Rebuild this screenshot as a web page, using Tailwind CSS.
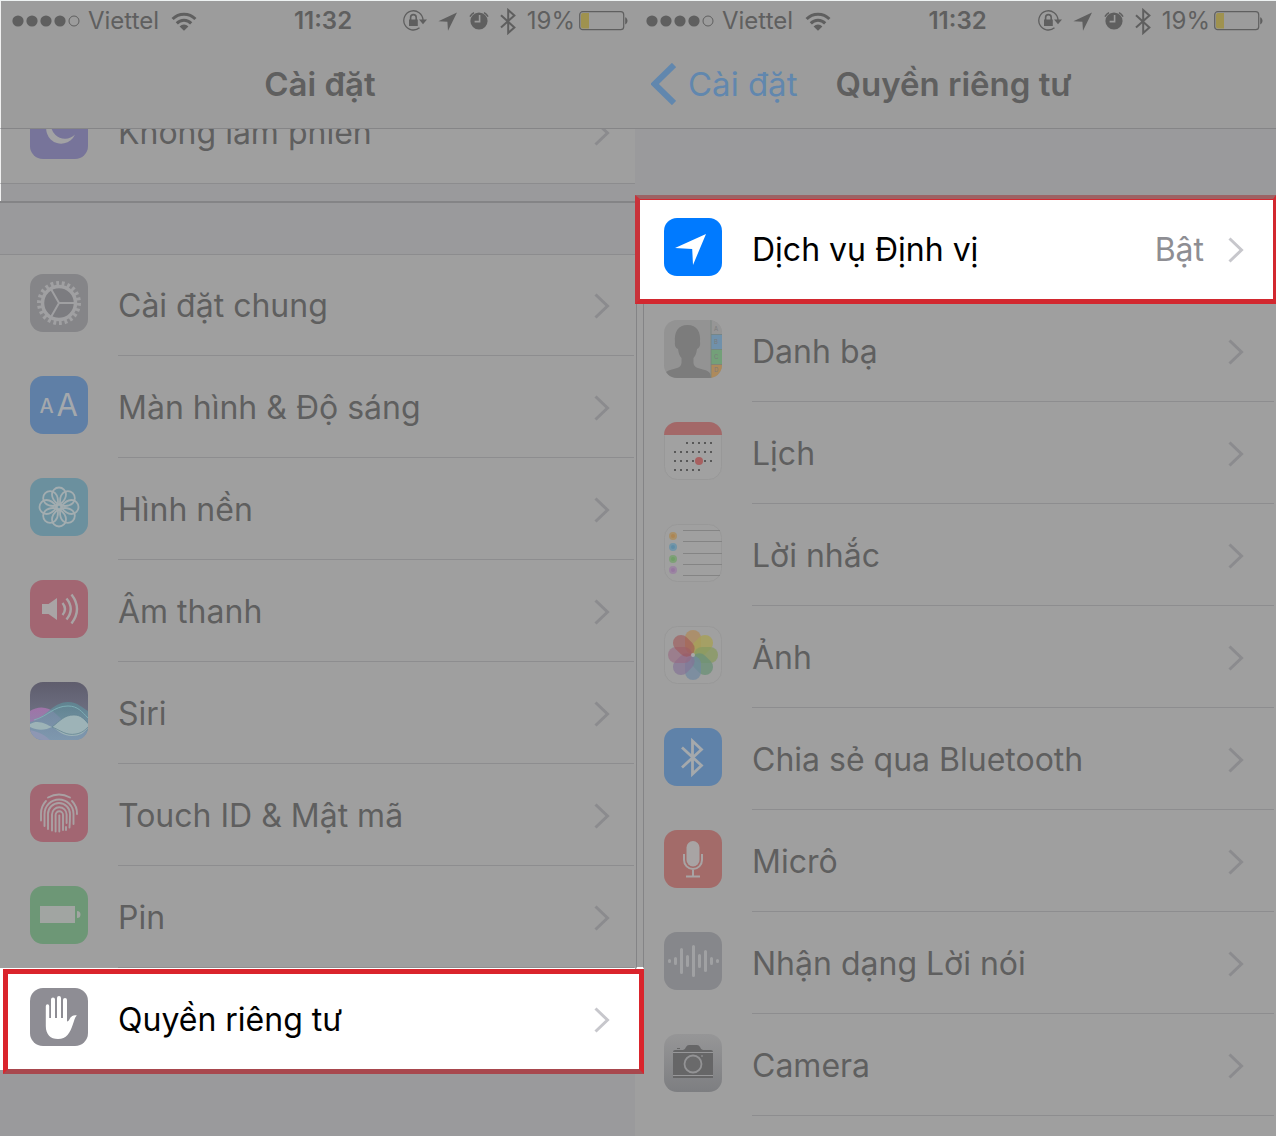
<!DOCTYPE html>
<html lang="vi">
<head>
    <meta charset="UTF-8">
    <meta name="viewport" content="width=device-width, initial-scale=1.0">
    <title>Cài đặt - Quyền riêng tư</title>
    <script src="https://cdn.jsdelivr.net/npm/@tailwindcss/browser@4"></script>
</head>
<body class="bg-[#9a9a9c] font-['Inter','Liberation_Sans',sans-serif] text-[#5f5f5f]">
    <!-- Shared symbols -->
    <svg class="hidden">
        <symbol id="chevron" viewBox="0 0 16 26"><path d="M1.5 1.5L13.5 13 1.5 24.5" fill="none" stroke="currentColor" stroke-width="3"/></symbol>
        <symbol id="signal" viewBox="0 0 68 12">
            <g fill="currentColor"><circle cx="6" cy="6" r="5.6"/><circle cx="20" cy="6" r="5.6"/><circle cx="34" cy="6" r="5.6"/><circle cx="48" cy="6" r="5.6"/></g>
            <circle cx="62" cy="6" r="5" fill="none" stroke="currentColor" stroke-width="1"/>
        </symbol>
        <symbol id="wifi" viewBox="0 0 26 19">
            <g fill="none" stroke="currentColor" stroke-width="3"><path d="M1.6 7a16 16 0 0 1 22.8 0"/><path d="M5.8 11.4a10 10 0 0 1 14.4 0"/></g>
            <path d="M8.6 14.4a6.2 6.2 0 0 1 8.8 0L13 18.8z" fill="currentColor"/>
        </symbol>
        <symbol id="status-icons" viewBox="0 0 114 27">
            <g fill="none" stroke="currentColor" stroke-width="1.3">
                <path d="M16.5 19.8A9.6 9.6 0 1 1 20 12"/>
                <path d="M7.6 12V9.4a2.8 2.8 0 0 1 5.6 0V12" stroke-width="1.6"/>
            </g>
            <path d="M6 11.5h8.8v6.5H6zM16 11.5h8l-4 4.8z" fill="currentColor"/>
            <path d="M54 4.5L35.4 13.2l9 .6.6 9z" fill="currentColor"/>
            <circle cx="76" cy="13" r="8.6" fill="currentColor"/>
            <path d="M67 8.6a11 11 0 0 1 4-4M85 8.6a11 11 0 0 0-4-4" fill="none" stroke="currentColor" stroke-width="1.6"/>
            <path d="M76.6 7v6.6h-5" fill="none" stroke="#9c9c9c" stroke-width="1.6"/>
            <path d="M98 7.2l13.4 12.2-6.2 5.6V2l6.2 5.4L98 19.6" fill="none" stroke="currentColor" stroke-width="2"/>
        </symbol>
        <symbol id="battery" viewBox="0 0 49 20">
            <rect x="0.7" y="0.7" width="44" height="18" rx="3" fill="none" stroke="currentColor" stroke-width="1.2"/>
            <path d="M46.2 6.2c3 1 3 6.2 0 7.2z" fill="currentColor"/>
            <path d="M2 4a2 2 0 0 1 2-2h6v15.5H4a2 2 0 0 1-2-2z" fill="#9f924f"/>
        </symbol>
    </svg>

    <main class="grid min-h-screen grid-cols-[635fr_641fr] border-t border-[#eef2f2]">
        <!-- Settings screen -->
        <section class="min-w-0">
            <header class="h-32 border-b border-l border-b-[#858587] border-l-[#f0f0f0] bg-[#9c9c9c]">
                <div class="grid h-10 grid-cols-[280fr_auto_274fr] items-center pr-[7px] pl-[11px] text-2xl">
                    <div class="flex items-center gap-2">
                        <svg class="h-3 w-[68px]"><use href="#signal"/></svg>
                        <span>Viettel</span>
                        <svg class="ml-1 h-[19px] w-[26px]"><use href="#wifi"/></svg>
                    </div>
                    <time class="font-semibold">11:32</time>
                    <div class="flex items-center justify-end">
                        <svg class="mr-2.5 h-[27px] w-[114px]"><use href="#status-icons"/></svg>
                        <span class="mr-1">19%</span>
                        <svg class="h-5 w-[49px]"><use href="#battery"/></svg>
                    </div>
                </div>
                <h1 class="pt-5 pl-1 text-center text-[33px] leading-[46px] font-semibold">Cài đặt</h1>
            </header>

            <div class="flex h-[55px] items-end overflow-hidden border-b border-l border-b-[#8c8c8e] border-l-[#f0f0f0] bg-[#9f9f9f]">
                <a href="#" class="flex h-[102px] w-full shrink-0 items-start pl-[29px]">
                    <svg class="mt-5 size-[58px] shrink-0" viewBox="0 0 58 58">
                        <rect width="58" height="58" rx="13" fill="#77749a"/>
                        <path d="M25 14a15 15 0 1 0 20 19.5A13.5 13.5 0 0 1 25 14z" fill="#a2a2a4"/>
                    </svg>
                    <span class="ml-[30px] flex h-full flex-1 items-center justify-between pt-0.5 pr-[25px] text-[32px]">
                        Không làm phiền
                        <svg class="h-[26px] w-4 text-[#8b8b8e]"><use href="#chevron"/></svg>
                    </span>
                </a>
            </div>
            <div class="h-[17px] border-l border-[#f0f0f0]"></div>
            <div class="h-[53px] border-t-2 border-[#848486]"></div>

            <ul class="bg-[#9f9f9f] text-[32px] shadow-[inset_0_1px_0_#8c8c8e]">
                <li>
                    <a href="#" class="flex h-[102px] items-start pl-[30px]">
                        <svg class="mt-5 size-[58px] shrink-0" viewBox="0 0 58 58">
                            <rect width="58" height="58" rx="13" fill="#858588"/>
                            <circle cx="29" cy="29" r="15" fill="#7c7c80"/>
                            <g fill="none" stroke="#a0a0a2">
                                <circle cx="29" cy="29" r="19.5" stroke-width="5" pathLength="44" stroke-dasharray="1 1"/>
                                <circle cx="29" cy="29" r="16.5" stroke-width="3.5"/>
                                <path d="M29 29h16M29 29l-8-13.9M29 29l-8 13.9" stroke-width="2"/>
                            </g>
                        </svg>
                        <span class="ml-[30px] mr-px flex h-full flex-1 items-center justify-between border-b border-[#8d8d8f] pt-0.5 pr-6">
                            Cài đặt chung
                            <svg class="h-[26px] w-4 text-[#8b8b8e]"><use href="#chevron"/></svg>
                        </span>
                    </a>
                </li>
                <li>
                    <a href="#" class="flex h-[102px] items-start pl-[30px]">
                        <svg class="mt-5 size-[58px] shrink-0" viewBox="0 0 58 58">
                            <rect width="58" height="58" rx="13" fill="#5f7fa6"/>
                            <g fill="#a4a8ac" font-family="Inter, sans-serif"><text x="9.5" y="37" font-size="20" font-weight="500">A</text><text x="26.5" y="40" font-size="31">A</text></g>
                        </svg>
                        <span class="ml-[30px] mr-px flex h-full flex-1 items-center justify-between border-b border-[#8d8d8f] pt-0.5 pr-6">
                            Màn hình &amp; Độ sáng
                            <svg class="h-[26px] w-4 text-[#8b8b8e]"><use href="#chevron"/></svg>
                        </span>
                    </a>
                </li>
                <li>
                    <a href="#" class="flex h-[102px] items-start pl-[30px]">
                        <svg class="mt-5 size-[58px] shrink-0" viewBox="0 0 58 58">
                            <defs><path id="petal" d="M29 27C24 23.5 22 20 22 16.500a7 7 0 0 1 14 0C36 20 34 23.5 29 27z"/></defs>
                            <rect width="58" height="58" rx="13" fill="#6b909e"/>
                            <g fill="none" stroke="#a3adb0" stroke-width="1.8">
                                <use href="#petal"/><use href="#petal" transform="rotate(45 29 29)"/><use href="#petal" transform="rotate(90 29 29)"/><use href="#petal" transform="rotate(135 29 29)"/>
                                <use href="#petal" transform="rotate(180 29 29)"/><use href="#petal" transform="rotate(225 29 29)"/><use href="#petal" transform="rotate(270 29 29)"/><use href="#petal" transform="rotate(315 29 29)"/>
                                <circle cx="29" cy="29" r="3"/>
                            </g>
                        </svg>
                        <span class="ml-[30px] mr-px flex h-full flex-1 items-center justify-between border-b border-[#8d8d8f] pt-0.5 pr-6">
                            Hình nền
                            <svg class="h-[26px] w-4 text-[#8b8b8e]"><use href="#chevron"/></svg>
                        </span>
                    </a>
                </li>
                <li>
                    <a href="#" class="flex h-[102px] items-start pl-[30px]">
                        <svg class="mt-5 size-[58px] shrink-0" viewBox="0 0 58 58">
                            <rect width="58" height="58" rx="13" fill="#a26672"/>
                            <path d="M12 24h6.5L27 18v22l-8.5-6H12z" fill="#a9a4a5"/>
                            <g fill="none" stroke="#a9a4a5" stroke-width="2.4"><path d="M32.500 23q5 6 0 12"/><path d="M36.500 18.500q8.500 10.500 0 21"/><path d="M41.500 14.500q11 14.500 0 29"/></g>
                        </svg>
                        <span class="ml-[30px] mr-px flex h-full flex-1 items-center justify-between border-b border-[#8d8d8f] pt-0.5 pr-6">
                            Âm thanh
                            <svg class="h-[26px] w-4 text-[#8b8b8e]"><use href="#chevron"/></svg>
                        </span>
                    </a>
                </li>
                <li>
                    <a href="#" class="flex h-[102px] items-start pl-[30px]">
                        <svg class="mt-5 size-[58px] shrink-0" viewBox="0 0 58 58">
                            <defs>
                                <clipPath id="tile"><rect width="58" height="58" rx="13"/></clipPath>
                                <linearGradient id="siri-sky" x2="0" y2="1"><stop stop-color="#5f5d6d"/><stop offset="0.5" stop-color="#6c6e80"/><stop offset="1" stop-color="#7c92a2"/></linearGradient>
                                <linearGradient id="siri-pink" x2="0" y2="1"><stop stop-color="#a073a8"/><stop offset="1" stop-color="#8290aa"/></linearGradient>
                                <linearGradient id="siri-blue" x2="0" y2="1"><stop stop-color="#5c8f9a"/><stop offset="1" stop-color="#7c9bb0"/></linearGradient>
                            </defs>
                            <g clip-path="url(#tile)">
                                <rect width="58" height="58" fill="url(#siri-sky)"/>
                                <path d="M0 29C8 24 18 24 26 32s18 14 32 18v8H0z" fill="url(#siri-pink)"/>
                                <path d="M0 40C14 38 22 20 38 20c10 0 14 6 20 9v29H0z" fill="url(#siri-blue)" opacity="0.7"/>
                                <path d="M4 38C18 34 24 24 38 24c10 0 14 6 20 12" fill="none" stroke="#7eaeb4" stroke-width="1"/>
                                <path d="M0 42c8-5 16 0 22 3 8-6 12-12 22-12 7 0 10 4 14 9v4c-4 5-8 8-16 8-10 0-14-6-20-9-6 3-14 4-22 0z" fill="#9db3b7"/>
                                <path d="M22 45c8 3 14 9 24 7 6-1 9-4 12-7M22 45c8-6 12-12 22-12 7 0 10 4 14 8" fill="none" stroke="#668794" stroke-width="0.8"/>
                                <path d="M0 48c8 2 14 4 20 10H0z" fill="#8e97b3"/>
                            </g>
                        </svg>
                        <span class="ml-[30px] mr-px flex h-full flex-1 items-center justify-between border-b border-[#8d8d8f] pt-0.5 pr-6">
                            Siri
                            <svg class="h-[26px] w-4 text-[#8b8b8e]"><use href="#chevron"/></svg>
                        </span>
                    </a>
                </li>
                <li>
                    <a href="#" class="flex h-[102px] items-start pl-[30px]">
                        <svg class="mt-5 size-[58px] shrink-0" viewBox="0 0 58 58">
                            <rect width="58" height="58" rx="13" fill="#a26672"/>
                            <g fill="none" stroke="#a9a1a3" stroke-width="1.9" stroke-linecap="round">
                                <path d="M18 13.500q11-6 22 0"/>
                                <path d="M11 36.500v-7a18 18 0 0 1 5-12.500M42 17a18 18 0 0 1 5 13"/>
                                <path d="M14.500 42V30a14.500 14.500 0 0 1 29 0v10"/>
                                <path d="M18 45V30a11 11 0 0 1 22 0q0 8-.5 13.500"/>
                                <path d="M22 46.500V30.500a7.300 7.300 0 0 1 14.600 0V39M36 43v3"/>
                                <path d="M25.600 47.500V31a3.700 3.700 0 0 1 7.400 0v15"/>
                                <path d="M29.300 47.500V31.500"/>
                            </g>
                        </svg>
                        <span class="ml-[30px] mr-px flex h-full flex-1 items-center justify-between border-b border-[#8d8d8f] pt-0.5 pr-6">
                            Touch ID &amp; Mật mã
                            <svg class="h-[26px] w-4 text-[#8b8b8e]"><use href="#chevron"/></svg>
                        </span>
                    </a>
                </li>
                <li>
                    <a href="#" class="flex h-[102px] items-start pl-[30px]">
                        <svg class="mt-5 size-[58px] shrink-0" viewBox="0 0 58 58">
                            <rect width="58" height="58" rx="13" fill="#6d9776"/>
                            <path d="M10 20h35v17H10zM47 25a3.5 3.5 0 0 1 0 7z" fill="#a1a5a2"/>
                        </svg>
                        <span class="ml-[30px] mr-px flex h-full flex-1 items-center justify-between border-b border-[#8d8d8f] pt-0.5 pr-6">
                            Pin
                            <svg class="h-[26px] w-4 text-[#8b8b8e]"><use href="#chevron"/></svg>
                        </span>
                    </a>
                </li>
                <!-- Highlighted row, its frame reaches over the next screen -->
                <li class="relative z-10 bg-white text-black">
                    <span class="absolute top-px -right-[9px] -bottom-1 left-[3px] border-5 border-[#da242c] border-b-[#a8484e] bg-white"></span>
                    <a href="#" class="relative flex h-[102px] items-start pl-[30px]">
                        <svg class="mt-5 size-[58px] shrink-0" viewBox="0 0 58 58">
                            <rect width="58" height="58" rx="13" fill="#8e8d94"/>
                            <path d="M15.800 18a1.700 1.700 0 0 1 3.400 0v12h1.800V11.500a2 2 0 0 1 4 0V30h2V10a2 2 0 0 1 4 0v20h2V12a2 2 0 0 1 4 0v21.500c1.200 0 2-1 2.600-2.500 1.400-3 4-4.500 7.400-3.600C45.500 28 44.500 31.500 43 36c-3 9-6.500 15-15 15-7.500 0-12.200-4.500-12.200-13z" fill="#fff"/>
                        </svg>
                        <span class="ml-[30px] flex h-full flex-1 items-center justify-between pt-0.5 pr-[25px]">
                            Quyền riêng tư
                            <svg class="h-[26px] w-4 text-[#c7c7cc]"><use href="#chevron"/></svg>
                        </span>
                    </a>
                </li>
            </ul>
        </section>

        <!-- Privacy screen -->
        <section class="min-w-0 bg-[#9f9f9f]">
            <header class="h-32 border-b border-[#858587] bg-[#9c9c9c]">
                <div class="grid h-10 grid-cols-[280fr_auto_274fr] items-center pr-[13px] pl-[11px] text-2xl">
                    <div class="flex items-center gap-2">
                        <svg class="h-3 w-[68px]"><use href="#signal"/></svg>
                        <span>Viettel</span>
                        <svg class="ml-1 h-[19px] w-[26px]"><use href="#wifi"/></svg>
                    </div>
                    <time class="font-semibold">11:32</time>
                    <div class="flex items-center justify-end">
                        <svg class="mr-2.5 h-[27px] w-[114px]"><use href="#status-icons"/></svg>
                        <span class="mr-1">19%</span>
                        <svg class="h-5 w-[49px]"><use href="#battery"/></svg>
                    </div>
                </div>
                <nav class="flex items-center gap-[38px] pt-5 pl-4 text-[33px] leading-[46px]">
                    <a href="#" class="flex items-center gap-3 text-[#6187ae]">
                        <svg class="h-[42px] w-[25px]" viewBox="0 0 25 42"><path d="M23 2L3.500 21 23 40" fill="none" stroke="currentColor" stroke-width="6"/></svg>
                        Cài đặt
                    </a>
                    <h1 class="font-semibold">Quyền riêng tư</h1>
                </nav>
            </header>
            <div class="h-[69px] bg-[#9a9a9c]"></div>

            <ul class="relative text-[32px]">
                <!-- Edges of the gap between the two screens -->
                <li aria-hidden="true" class="absolute top-[106px] left-px h-[665px] w-2 border-x border-b-2 border-x-[#848486] border-b-white"></li>
                <li class="relative bg-white text-black">
                    <span class="absolute -top-[3px] right-0 -bottom-1 left-0 border-t-4 border-r-[3px] border-b-5 border-l-5 border-t-[#9c6264] border-r-[#d2282f] border-b-[#d2282f] border-l-[#c8323a] bg-white shadow-[inset_0_1px_0_#d2282f]"></span>
                    <a href="#" class="relative flex h-[102px] items-start pl-[29px]">
                        <svg class="mt-5 size-[58px] shrink-0" viewBox="0 0 58 58">
                            <rect width="58" height="58" rx="13" fill="#007aff"/>
                            <path d="M42 16L11 30l17.200 1L29 47z" fill="#fff"/>
                        </svg>
                        <span class="ml-[30px] flex h-full flex-1 items-center justify-between pt-0.5 pr-8">
                            Dịch vụ Định vị
                            <span class="flex items-center gap-6 text-[#8e8e93]">Bật <svg class="h-[26px] w-4 text-[#c7c7cc]"><use href="#chevron"/></svg></span>
                        </span>
                    </a>
                </li>
                <li>
                    <a href="#" class="flex h-[102px] items-start pl-[29px]">
                        <svg class="mt-5 size-[58px] shrink-0" viewBox="0 0 58 58">
                            <g clip-path="url(#tile)">
                                <rect width="58" height="58" fill="#939393"/>
                                <path d="M0 58c0-6 3-7 8-8.500 5-1.500 9-2 9.500-6.500v-5c-2-2-3-5-3.500-9-3-1-3.500-5-3-7-1-10 3-17 12.500-17S37 12 36 22c.5 2 0 6-3 7-.5 4-1.500 7-3.500 9v5c.5 4.500 4.500 5 9.500 6.500 5 1.500 8 2.500 8 8.500z" fill="#7c7c7c"/>
                                <path d="M47 0h11v14H47z" fill="#969696"/><path d="M47 14h11v15H47z" fill="#7091ab"/><path d="M47 29h11v15H47z" fill="#73a079"/><path d="M47 44h11v14H47z" fill="#ad8a5b"/>
                                <path d="M47 0v58M47 14.500h11M47 29.500h11M47 44.500h11" stroke="#77837f" stroke-width="0.8"/>
                                <g font-family="Inter, sans-serif" font-size="6" fill="#7b7b7b"><text x="50" y="11">A</text><text x="50" y="24">B</text><text x="50" y="39">C</text><text x="50" y="52">D</text></g>
                            </g>
                        </svg>
                        <span class="ml-[30px] mr-[2px] flex h-full flex-1 items-center justify-between border-b border-[#8d8d8f] pt-0.5 pr-[30px]">
                            Danh bạ
                            <svg class="h-[26px] w-4 text-[#8b8b8e]"><use href="#chevron"/></svg>
                        </span>
                    </a>
                </li>
                <li>
                    <a href="#" class="flex h-[102px] items-start pl-[29px]">
                        <svg class="mt-5 size-[58px] shrink-0" viewBox="0 0 58 58">
                            <rect x="0.5" y="0.5" width="57" height="57" rx="13" fill="#a1a1a1" stroke="#989898"/>
                            <path d="M0 13A13 13 0 0 1 13 0h32a13 13 0 0 1 13 13z" fill="#a36868"/>
                            <g stroke="#585858" stroke-width="2" stroke-dasharray="2 4"><path d="M22 21h27M10 30h39M10 39h39M10 48h27"/></g>
                            <circle cx="35" cy="39" r="4" fill="#a86060"/>
                        </svg>
                        <span class="ml-[30px] mr-[2px] flex h-full flex-1 items-center justify-between border-b border-[#8d8d8f] pt-0.5 pr-[30px]">
                            Lịch
                            <svg class="h-[26px] w-4 text-[#8b8b8e]"><use href="#chevron"/></svg>
                        </span>
                    </a>
                </li>
                <li>
                    <a href="#" class="flex h-[102px] items-start pl-[29px]">
                        <svg class="mt-5 size-[58px] shrink-0" viewBox="0 0 58 58">
                            <rect x="0.5" y="0.5" width="57" height="57" rx="13" fill="#a0a0a0" stroke="#989898"/>
                            <path d="M19 6.500h37M19 17.500h39M19 29.500h39M19 40.500h39M19 51.500h37" stroke="#848484"/>
                            <g stroke-width="2"><circle cx="9" cy="12" r="3" fill="#ad8552" stroke="#a99069"/><circle cx="9" cy="23" r="3" fill="#5f8ca6" stroke="#7295a8"/><circle cx="9" cy="35" r="3" fill="#709f67" stroke="#7ea077"/><circle cx="9" cy="46" r="3" fill="#9677a0" stroke="#9b85a2"/></g>
                        </svg>
                        <span class="ml-[30px] mr-[2px] flex h-full flex-1 items-center justify-between border-b border-[#8d8d8f] pt-0.5 pr-[30px]">
                            Lời nhắc
                            <svg class="h-[26px] w-4 text-[#8b8b8e]"><use href="#chevron"/></svg>
                        </span>
                    </a>
                </li>
                <li>
                    <a href="#" class="flex h-[102px] items-start pl-[29px]">
                        <svg class="mt-5 size-[58px] shrink-0" viewBox="0 0 58 58">
                            <defs><rect id="leaf" x="21" y="4" width="16" height="24" rx="8"/></defs>
                            <rect x="0.5" y="0.5" width="57" height="57" rx="13" fill="#a0a0a0" stroke="#989898"/>
                            <g opacity="0.85">
                                <use href="#leaf" fill="#b08a58" fill-opacity="0.85"/>
                                <use href="#leaf" transform="rotate(45 29 29)" fill="#a8a04f" fill-opacity="0.85"/>
                                <use href="#leaf" transform="rotate(90 29 29)" fill="#869a58" fill-opacity="0.8"/>
                                <use href="#leaf" transform="rotate(135 29 29)" fill="#648f72" fill-opacity="0.8"/>
                                <use href="#leaf" transform="rotate(180 29 29)" fill="#6a86a0" fill-opacity="0.75"/>
                                <use href="#leaf" transform="rotate(225 29 29)" fill="#806c94" fill-opacity="0.7"/>
                                <use href="#leaf" transform="rotate(270 29 29)" fill="#985f7c" fill-opacity="0.6"/>
                                <use href="#leaf" transform="rotate(315 29 29)" fill="#a04a4a" fill-opacity="0.6"/>
                            </g>
                            <circle cx="29" cy="29" r="2" fill="#a8a8a8"/>
                        </svg>
                        <span class="ml-[30px] mr-[2px] flex h-full flex-1 items-center justify-between border-b border-[#8d8d8f] pt-0.5 pr-[30px]">
                            Ảnh
                            <svg class="h-[26px] w-4 text-[#8b8b8e]"><use href="#chevron"/></svg>
                        </span>
                    </a>
                </li>
                <li>
                    <a href="#" class="flex h-[102px] items-start pl-[29px]">
                        <svg class="mt-5 size-[58px] shrink-0" viewBox="0 0 58 58">
                            <rect width="58" height="58" rx="13" fill="#5f82a9"/>
                            <path d="M18 19.500l19.500 18L28.500 46V13l9 8.500L18 39.500" fill="none" stroke="#a5a9ac" stroke-width="2.8"/>
                        </svg>
                        <span class="ml-[30px] mr-[2px] flex h-full flex-1 items-center justify-between border-b border-[#8d8d8f] pt-0.5 pr-[30px]">
                            Chia sẻ qua Bluetooth
                            <svg class="h-[26px] w-4 text-[#8b8b8e]"><use href="#chevron"/></svg>
                        </span>
                    </a>
                </li>
                <li>
                    <a href="#" class="flex h-[102px] items-start pl-[29px]">
                        <svg class="mt-5 size-[58px] shrink-0" viewBox="0 0 58 58">
                            <rect width="58" height="58" rx="13" fill="#a36b69"/>
                            <rect x="22.500" y="11" width="13" height="25.500" rx="6.500" fill="#a8a4a4"/>
                            <path d="M20 24v6a9 9 0 0 0 18 0v-6M29 39v7.500M22 46.500h14" fill="none" stroke="#a8a4a4" stroke-width="2"/>
                        </svg>
                        <span class="ml-[30px] mr-[2px] flex h-full flex-1 items-center justify-between border-b border-[#8d8d8f] pt-0.5 pr-[30px]">
                            Micrô
                            <svg class="h-[26px] w-4 text-[#8b8b8e]"><use href="#chevron"/></svg>
                        </span>
                    </a>
                </li>
                <li>
                    <a href="#" class="flex h-[102px] items-start pl-[29px]">
                        <svg class="mt-5 size-[58px] shrink-0" viewBox="0 0 58 58">
                            <rect width="58" height="58" rx="13" fill="#86878b"/>
                            <path d="M5.500 28.500v1M11.500 26.500v5M17.500 17.500v23M23.500 24.500v9M29.500 14.500v29M35.500 23.500v11M41.500 19.500v19M47.500 26.500v5M53.500 28.500v1" stroke="#a0a1a3" stroke-width="3" stroke-linecap="round"/>
                        </svg>
                        <span class="ml-[30px] mr-[2px] flex h-full flex-1 items-center justify-between border-b border-[#8d8d8f] pt-0.5 pr-[30px]">
                            Nhận dạng Lời nói
                            <svg class="h-[26px] w-4 text-[#8b8b8e]"><use href="#chevron"/></svg>
                        </span>
                    </a>
                </li>
                <li>
                    <a href="#" class="flex h-[102px] items-start pl-[29px]">
                        <svg class="mt-5 size-[58px] shrink-0" viewBox="0 0 58 58">
                            <defs><linearGradient id="metal" x2="0" y2="1"><stop stop-color="#969697"/><stop offset="1" stop-color="#7d7e81"/></linearGradient></defs>
                            <rect width="58" height="58" rx="13" fill="url(#metal)"/>
                            <path d="M9 44V18q0-2 2-2h8q2 0 3-3 1-2 3-2h8q2 0 3 2 1 3 3 3h8q2 0 2 2v26zM13 14h3v1h-3z" fill="#666667"/>
                            <path d="M9 18.500h40M9 41.500h40" stroke="#98989a" stroke-width="1"/>
                            <circle cx="29" cy="30" r="8.500" fill="#6a6a6b" stroke="#939395" stroke-width="1.8"/>
                            <circle cx="38" cy="22" r="1" fill="#88888a"/>
                        </svg>
                        <span class="ml-[30px] mr-[2px] flex h-full flex-1 items-center justify-between border-b border-[#8d8d8f] pt-0.5 pr-[30px]">
                            Camera
                            <svg class="h-[26px] w-4 text-[#8b8b8e]"><use href="#chevron"/></svg>
                        </span>
                    </a>
                </li>
            </ul>
        </section>
    </main>
</body>
</html>
